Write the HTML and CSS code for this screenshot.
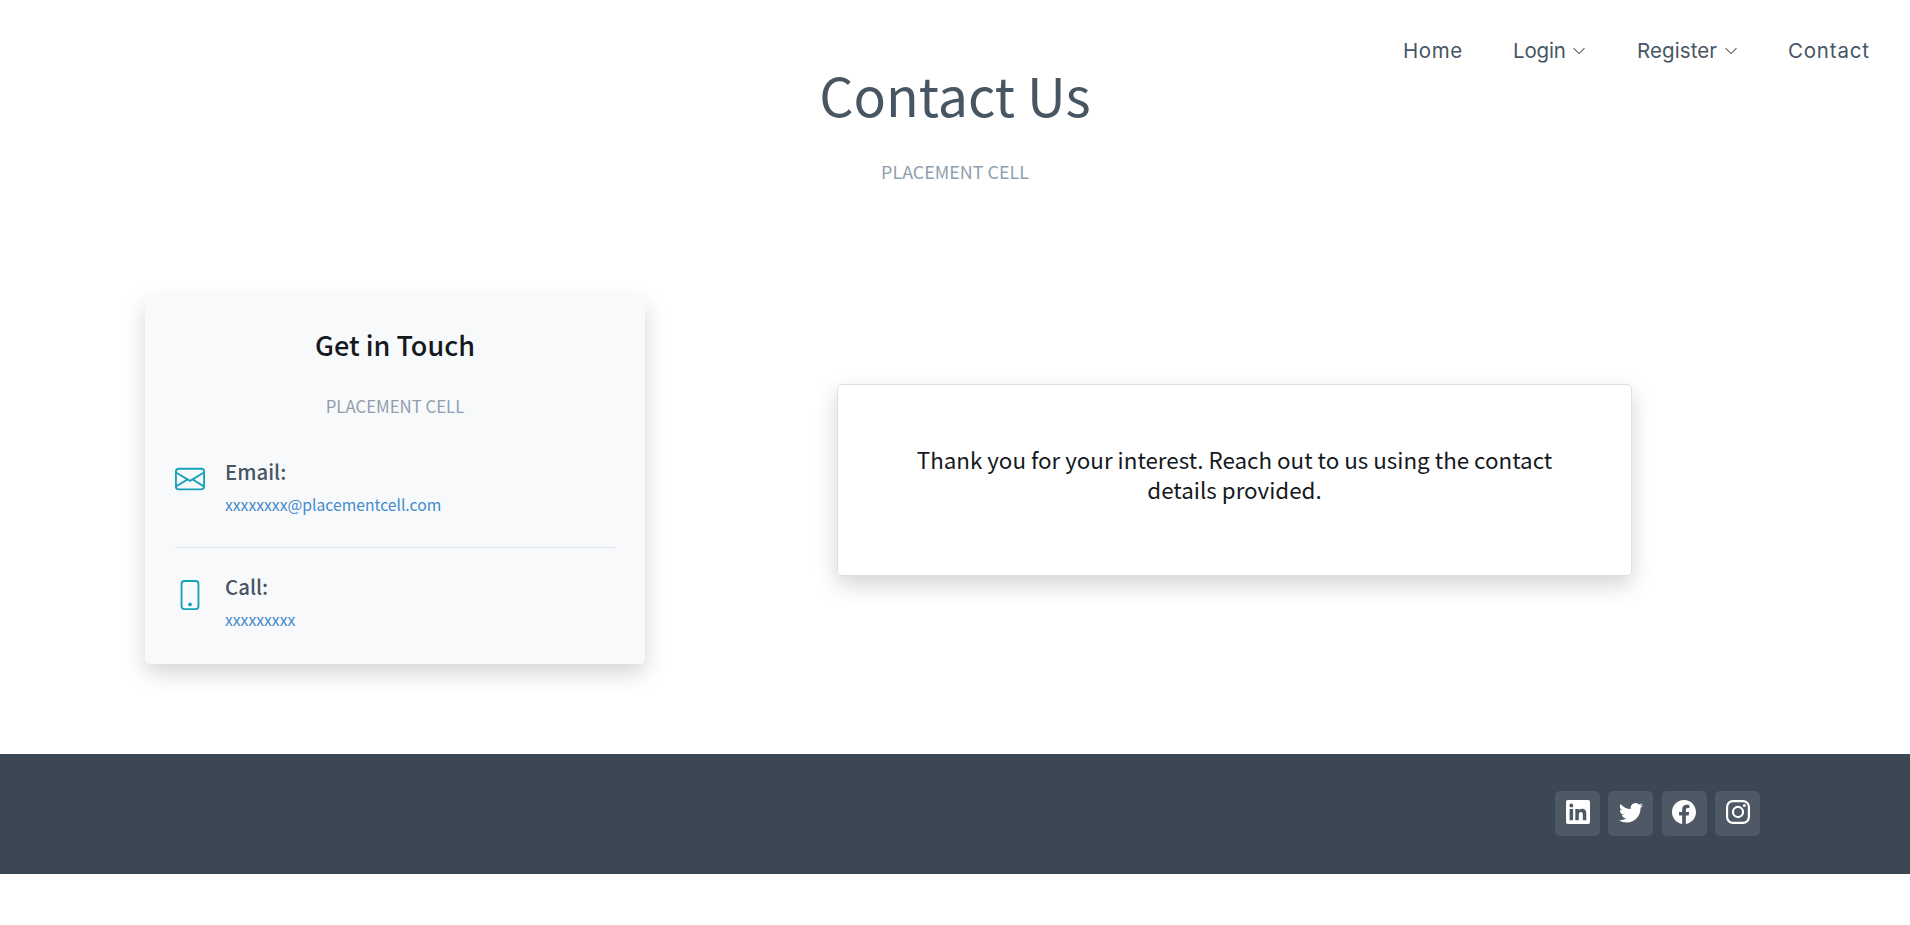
FILE: index.html
```html
<!DOCTYPE html>
<html lang="en">
<head>
<meta charset="utf-8">
<title>Contact Us</title>
<link rel="stylesheet" href="styles.css">
</head>
<body>
<nav class="nav">
  <a class="nav-link home">Home</a>
  <a class="nav-link login">Login</a>
  <svg class="chevron" viewBox="0 0 16 16"><path fill-rule="evenodd" d="M1.646 4.646a.5.5 0 0 1 .708 0L8 10.293l5.646-5.647a.5.5 0 0 1 .708.708l-6 6a.5.5 0 0 1-.708 0l-6-6a.5.5 0 0 1 0-.708z"/></svg>
  <a class="nav-link register">Register</a>
  <svg class="chevron" viewBox="0 0 16 16"><path fill-rule="evenodd" d="M1.646 4.646a.5.5 0 0 1 .708 0L8 10.293l5.646-5.647a.5.5 0 0 1 .708.708l-6 6a.5.5 0 0 1-.708 0l-6-6a.5.5 0 0 1 0-.708z"/></svg>
  <a class="nav-link contact">Contact</a>
</nav>
<header class="hero">
  <h1 class="title">Contact Us</h1>
  <p class="subtitle">PLACEMENT CELL</p>
</header>
<main class="main">
  <section class="card">
    <h2 class="card-title">Get in Touch</h2>
    <p class="card-subtitle">PLACEMENT CELL</p>
    <div class="item">
      <svg class="icon" viewBox="0 0 16 16"><path d="M0 4a2 2 0 0 1 2-2h12a2 2 0 0 1 2 2v8a2 2 0 0 1-2 2H2a2 2 0 0 1-2-2V4Zm2-1a1 1 0 0 0-1 1v.217l7 4.2 7-4.2V4a1 1 0 0 0-1-1H2Zm13 2.383-4.708 2.825L15 11.105V5.383Zm-.034 6.876-5.64-3.471L8 9.583l-1.326-.795-5.64 3.47A1 1 0 0 0 2 13h12a1 1 0 0 0 .966-.741ZM1 11.105l4.708-2.897L1 5.383v5.722Z"/></svg>
      <div>
        <h3 class="label">Email:</h3>
        <p class="value">xxxxxxxx@placementcell.com</p>
      </div>
    </div>
    <hr class="divider">
    <div class="item">
      <svg class="icon" viewBox="0 0 16 16"><path d="M11 1a1 1 0 0 1 1 1v12a1 1 0 0 1-1 1H5a1 1 0 0 1-1-1V2a1 1 0 0 1 1-1h6zM5 0a2 2 0 0 0-2 2v12a2 2 0 0 0 2 2h6a2 2 0 0 0 2-2V2a2 2 0 0 0-2-2H5z"/><path d="M8 14a1 1 0 1 0 0-2 1 1 0 0 0 0 2z"/></svg>
      <div>
        <h3 class="label">Call:</h3>
        <p class="value">xxxxxxxxx</p>
      </div>
    </div>
  </section>
  <section class="message">
    <p class="message-text">Thank you for your interest. Reach out to us using the contact</p>
    <p class="message-text">details provided.</p>
  </section>
</main>
<footer class="footer">
  <a class="social"><svg viewBox="0 0 24 24"><path d="M1.8 0h20.4Q24 0 24 1.8v20.4Q24 24 22.2 24H1.8Q0 24 0 22.2V1.8Q0 0 1.8 0ZM3.6 9.1v11.2h3.5V9.1ZM5.35 3.5a2 2 0 1 0 0 4 2 2 0 0 0 0-4ZM9.3 9.1v11.2h3.5v-5.6c0-1.6.5-2.8 2.1-2.8s1.9 1.3 1.9 2.9v5.5h3.5v-6.2c0-3.2-1-5.3-4.2-5.3-1.6 0-2.7.8-3.2 1.7V9.1Z" fill-rule="evenodd"/></svg></a>
  <a class="social"><svg viewBox="0 0 16 16"><path d="M5.026 15c6.038 0 9.341-5.003 9.341-9.334 0-.14 0-.282-.006-.422A6.685 6.685 0 0 0 16 3.542a6.658 6.658 0 0 1-1.889.518 3.301 3.301 0 0 0 1.447-1.817 6.533 6.533 0 0 1-2.087.793A3.286 3.286 0 0 0 7.875 6.03a9.325 9.325 0 0 1-6.767-3.429 3.289 3.289 0 0 0 1.018 4.382A3.323 3.323 0 0 1 .64 6.575v.045a3.288 3.288 0 0 0 2.632 3.218 3.203 3.203 0 0 1-.865.115 3.23 3.23 0 0 1-.614-.057 3.283 3.283 0 0 0 3.067 2.277A6.588 6.588 0 0 1 .78 13.58a6.32 6.32 0 0 1-.78-.045A9.344 9.344 0 0 0 5.026 15z"/></svg></a>
  <a class="social"><svg viewBox="0 0 16 16"><path d="M16 8.049c0-4.446-3.582-8.05-8-8.05C3.58 0-.002 3.603-.002 8.05c0 4.017 2.926 7.347 6.75 7.951v-5.625h-2.03V8.05H6.75V6.275c0-2.017 1.195-3.131 3.022-3.131.876 0 1.791.157 1.791.157v1.98h-1.009c-.993 0-1.303.621-1.303 1.258v1.51h2.218l-.354 2.326H9.25V16c3.824-.604 6.75-3.934 6.75-7.951z"/></svg></a>
  <a class="social"><svg viewBox="0 0 24 24"><g fill="none" stroke="#fff" stroke-width="2.2"><rect x="1.1" y="1.1" width="21.8" height="21.8" rx="5.9"/><circle cx="12" cy="12" r="5.05"/></g><circle cx="18.4" cy="5.6" r="1.5"/></svg></a>
</footer>
</body>
</html>
```
FILE: styles.css
```css
* { box-sizing: border-box; }
body {
  margin: 0;
  background: #fff;
  font-family: "Noto Sans CJK SC", "Open Sans", sans-serif;
  color: #15191d;
}
h1, h2, h3, p { margin: 0; font-weight: 400; white-space: nowrap; }
.nav {
  display: flex;
  align-items: center;
  height: 60px;
  padding: 42px 0 0 1403px;
  font-family: Inter, sans-serif;
  font-size: 20.5px;
  line-height: 18px;
  color: #485664;
}
.nav-link { white-space: nowrap; }
.home { width: 110px; letter-spacing: 0.6px; }
.login { width: 58px; letter-spacing: -0.15px; }
.register { width: 87px; letter-spacing: 0.1px; }
.contact { letter-spacing: 0.8px; }
.chevron { width: 14px; height: 14px; fill: #485664; }
.login + .chevron { margin-left: 1px; margin-right: 51px; }
.register + .chevron { margin-right: 50px; }
.hero { height: 236px; text-align: center; }
.title { font-size: 53.7px; line-height: 68px; color: #485664; }
.subtitle { margin-top: 28px; font-size: 17.9px; line-height: 30px; color: #8f9fae; }
.main { display: flex; height: 458px; padding-left: 145px; }
.card {
  width: 500px;
  height: 368px;
  padding: 29px 30px;
  background: #f8f9fb;
  border-radius: 5px;
  box-shadow: 0 9px 22px rgba(0, 0, 0, .17);
}
.card-title { text-align: center; font-size: 27px; font-weight: 500; line-height: 40px; }
.card-subtitle { margin-top: 26px; text-align: center; font-size: 16.8px; line-height: 30px; color: #8f9fae; }
.item { display: flex; gap: 20px; height: 60px; }
.card-subtitle + .item { margin-top: 38px; }
.icon { width: 30px; height: 30px; margin-top: 5px; fill: #17a2b8; }
.divider + .item .icon { margin-top: 6px; }
.label { font-size: 20.4px; font-weight: 500; line-height: 24px; color: #485664; }
.value { margin-top: 10px; font-size: 15.7px; line-height: 24px; color: #428bca; }
.divider { height: 1px; margin: 28px 0 26px; border: 0; background: #dee2e6; }
.message {
  width: 795px;
  height: 192px;
  margin: 88px 0 0 192px;
  padding-top: 59px;
  border: 1px solid #dfdfdf;
  border-radius: 5px;
  box-shadow: 0 9px 22px rgba(0, 0, 0, .17);
  text-align: center;
}
.message-text { font-size: 22.37px; line-height: 30px; }
.footer {
  display: flex;
  gap: 8.4px;
  height: 120px;
  padding: 37px 0 0 1555px;
  background: #3b4752;
}
.social {
  width: 45px;
  height: 45px;
  padding: 9px 10.5px;
  border-radius: 5px;
  background: #4e5965;
}
.social svg { display: block; width: 24px; height: 24px; fill: #fff; }
```
